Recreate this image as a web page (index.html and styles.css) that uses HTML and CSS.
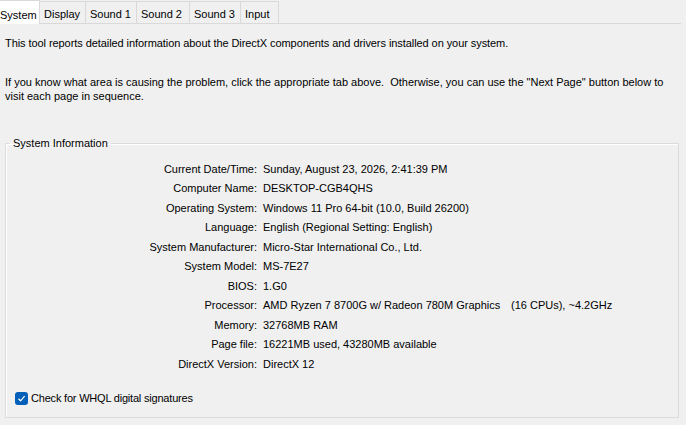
FILE: index.html
```html
<!DOCTYPE html>
<html>
<head>
<meta charset="utf-8">
<link rel="stylesheet" href="styles.css">
</head>
<body>
<div class="tabs">
  <div class="tab active">System</div>
  <div class="tab">Display</div>
  <div class="tab">Sound 1</div>
  <div class="tab">Sound 2</div>
  <div class="tab">Sound 3</div>
  <div class="tab">Input</div>
</div>
<div class="page">
  <p class="intro">This tool reports detailed information about the DirectX components and drivers installed on your system.</p>
  <p class="help">If you know what area is causing the problem, click the appropriate tab above.&nbsp; Otherwise, you can use the "Next Page" button below to visit each page in sequence.</p>
  <fieldset class="group">
    <legend>System Information</legend>
    <div class="rows">
      <div class="lbl">Current Date/Time:</div><div class="val">Sunday, August 23, 2026, 2:41:39 PM</div>
      <div class="lbl">Computer Name:</div><div class="val">DESKTOP-CGB4QHS</div>
      <div class="lbl">Operating System:</div><div class="val">Windows 11 Pro 64-bit (10.0, Build 26200)</div>
      <div class="lbl">Language:</div><div class="val">English (Regional Setting: English)</div>
      <div class="lbl">System Manufacturer:</div><div class="val">Micro-Star International Co., Ltd.</div>
      <div class="lbl">System Model:</div><div class="val">MS-7E27</div>
      <div class="lbl">BIOS:</div><div class="val">1.G0</div>
      <div class="lbl">Processor:</div><div class="val proc"><span class="cpu">AMD Ryzen 7 8700G w/ Radeon 780M Graphics</span><span>(16 CPUs), ~4.2GHz</span></div>
      <div class="lbl">Memory:</div><div class="val">32768MB RAM</div>
      <div class="lbl">Page file:</div><div class="val">16221MB used, 43280MB available</div>
      <div class="lbl">DirectX Version:</div><div class="val">DirectX 12</div>
    </div>
    <label class="check">
      <span class="box"><svg width="9" height="9" viewBox="0 0 9 9"><path d="M1.5 4.8 L3.6 6.8 L7.6 2.2" fill="none" stroke="#fff" stroke-width="1.2"/></svg></span>
      <span class="cklbl">Check for WHQL digital signatures</span>
    </label>
  </fieldset>
</div>
</body>
</html>
```
FILE: styles.css
```css
html, body {
  margin: 0;
  padding: 0;
  background: #f0f0f0;
}
body {
  width: 686px;
  height: 425px;
  overflow: hidden;
  font-family: "Liberation Sans", Arial, sans-serif;
  font-size: 11px;
  color: #000;
}
.tabs {
  display: flex;
  height: 24px;
  border-bottom: 1px solid #d9d9d9;
  box-sizing: border-box;
  width: 681px;
  align-items: flex-end;
}
.tab {
  flex-shrink: 0;
  white-space: nowrap;
  height: 22px;
  box-sizing: border-box;
  padding: 0 0 0 4px;
  border: 1px solid #d9d9d9;
  border-bottom: none;
  margin-left: -1px;
  background: #f0f0f0;
  line-height: 24px;
  font-size: 11px;
}
.tab.active {
  height: 24px;
  width: 40px;
  background: #fff;
  margin-left: 0;
  margin-bottom: -1px;
  padding: 0;
  border-left: none;
  line-height: 28px;
  z-index: 1;
}
.tab:nth-child(2) { width: 47px; }
.tab:nth-child(3) { width: 52px; }
.tab:nth-child(4) { width: 54px; }
.tab:nth-child(5) { width: 52px; }
.tab:nth-child(6) { width: 39px; }
.page {
  padding: 0 0 0 5px;
}
p {
  margin: 0;
  line-height: 14px;
  font-size: 11px;
}
.intro {
  padding-top: 12px;
  letter-spacing: -0.07px;
}
.help {
  margin-top: 25px;
  width: 665px;
}
.group {
  margin: 33px 0 0 0;
  width: 674px;
  height: 282px;
  box-sizing: border-box;
  border: 1px solid #dcdcdc;
  box-shadow: inset 1px 1px 0 #fff;
  padding: 0;
}
.group legend {
  margin-left: 3px;
  padding: 0 3px 0 4px;
  line-height: 14px;
  font-size: 11px;
}
.rows {
  display: grid;
  grid-template-columns: 251px 1fr;
  column-gap: 6px;
  grid-auto-rows: 19.5px;
  padding-top: 9px;
  align-items: center;
}
.lbl {
  text-align: right;
  white-space: nowrap;
}
.val {
  white-space: nowrap;
}
.proc {
  display: flex;
}
.cpu {
  width: 248px;
}
.check {
  display: flex;
  align-items: center;
  gap: 3px;
  margin: 18px 0 0 9px;
}
.cklbl {
  letter-spacing: -0.2px;
}
.box {
  width: 13px;
  height: 13px;
  border-radius: 3px;
  background: #005fb8;
  display: flex;
  align-items: center;
  justify-content: center;
}
```
